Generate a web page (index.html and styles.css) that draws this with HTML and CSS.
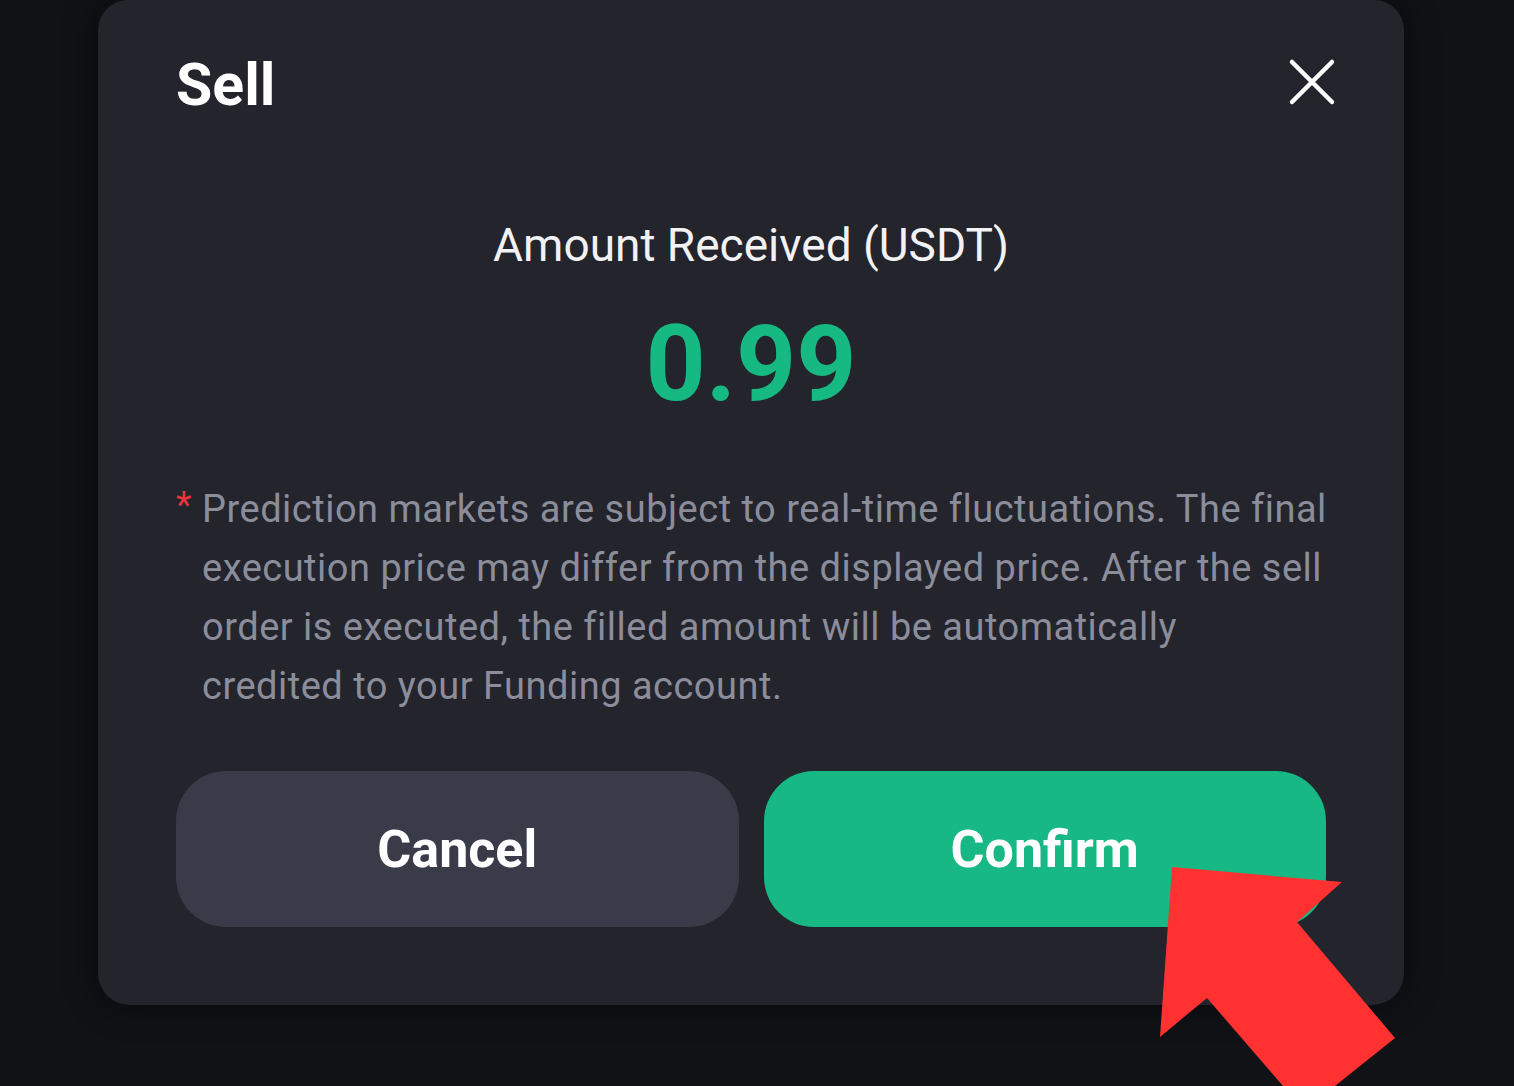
FILE: index.html
```html
<!DOCTYPE html>
<html lang="en">
<head>
    <meta charset="UTF-8">
    <meta name="viewport" content="width=device-width, initial-scale=1.0">
    <title>Sell</title>
    <link rel="stylesheet" href="styles.css">
</head>
<body>
    <div class="modal">
        <div class="modal-header">
            <h1 class="modal-title">Sell</h1>
            <button type="button" class="close-btn" aria-label="Close">
                <svg width="48" height="48" viewBox="0 0 48 48">
                    <path d="M4 4 L44 44 M44 4 L4 44" stroke="#ffffff" stroke-width="4.5" stroke-linecap="round" fill="none"/>
                </svg>
            </button>
        </div>

        <div class="amount-label">Amount Received (USDT)</div>
        <div class="amount-value">0.99</div>

        <div class="notice">
            <span class="star">*</span>
            <p>Prediction markets are subject to real-time fluctuations. The final execution price may differ from the displayed price. After the sell order is executed, the filled amount will be automatically credited&nbsp;to your Funding account.</p>
        </div>

        <div class="actions">
            <button type="button" class="btn btn-cancel">Cancel</button>
            <button type="button" class="btn btn-confirm">Confirm</button>
        </div>
    </div>

    <!-- annotation arrow drawn over the screenshot -->
    <svg class="arrow" width="1514" height="1086" viewBox="0 0 1514 1086">
        <polygon points="1172,867 1342,882 1297,922 1395,1038 1335,1086 1283,1086 1207,998 1160,1037" fill="#ff3131"/>
    </svg>
</body>
</html>
```

FILE: styles.css
```css
/* Page */
body {
    margin: 0;
    background-color: #111216;
    font-family: Roboto, "Liberation Sans", Arial, sans-serif;
    height: 1086px;
    overflow: hidden;
    position: relative;
}

/* Modal card */
.modal {
    box-sizing: border-box;
    width: 1306px;
    margin-left: 98px;
    padding: 0 78px 78px;
    background-color: #23242c;
    border-radius: 30px 30px 32px 32px;
    box-shadow: 0 0 28px 8px rgba(0, 0, 0, 0.35);
}

/* Header */
.modal-header {
    display: flex;
    justify-content: space-between;
    align-items: center;
    padding-top: 50px;
}

.modal-title {
    margin: 0;
    font-size: 59px;
    line-height: 70px;
    font-weight: 700;
    color: #ffffff;
}

.close-btn {
    background: none;
    border: none;
    padding: 0;
    margin-right: -10px;
    margin-top: -6px;
    width: 48px;
    height: 48px;
    cursor: pointer;
    display: flex;
}

/* Amount */
.amount-label {
    margin-top: 95px;
    text-align: center;
    font-size: 46px;
    line-height: 60px;
    color: #f2f2f4;
}

.amount-value {
    margin-top: 30px;
    text-align: center;
    font-size: 105px;
    line-height: 120px;
    font-weight: 700;
    color: #17b982;
}

/* Notice */
.notice {
    display: flex;
    margin-top: 55px;
    margin-right: -6px;
}

.star {
    width: 26px;
    flex-shrink: 0;
    padding-top: 5px;
    color: #e8363a;
    font-size: 36px;
    line-height: 40px;
}

.notice p {
    margin: 0;
    font-size: 38px;
    line-height: 59px;
    letter-spacing: 0.5px;
    color: #8b8d9b;
}

/* Buttons */
.actions {
    display: flex;
    gap: 25px;
    margin-top: 55px;
}

.btn {
    flex: 1;
    height: 156px;
    border: none;
    border-radius: 50px;
    font-family: Roboto, "Liberation Sans", Arial, sans-serif;
    font-size: 52px;
    font-weight: 700;
    color: #ffffff;
    cursor: pointer;
}

.btn-cancel {
    background-color: #393b48;
}

.btn-confirm {
    background-color: #17b884;
}

/* Arrow overlay */
.arrow {
    position: absolute;
    top: 0;
    left: 0;
    pointer-events: none;
}
```
